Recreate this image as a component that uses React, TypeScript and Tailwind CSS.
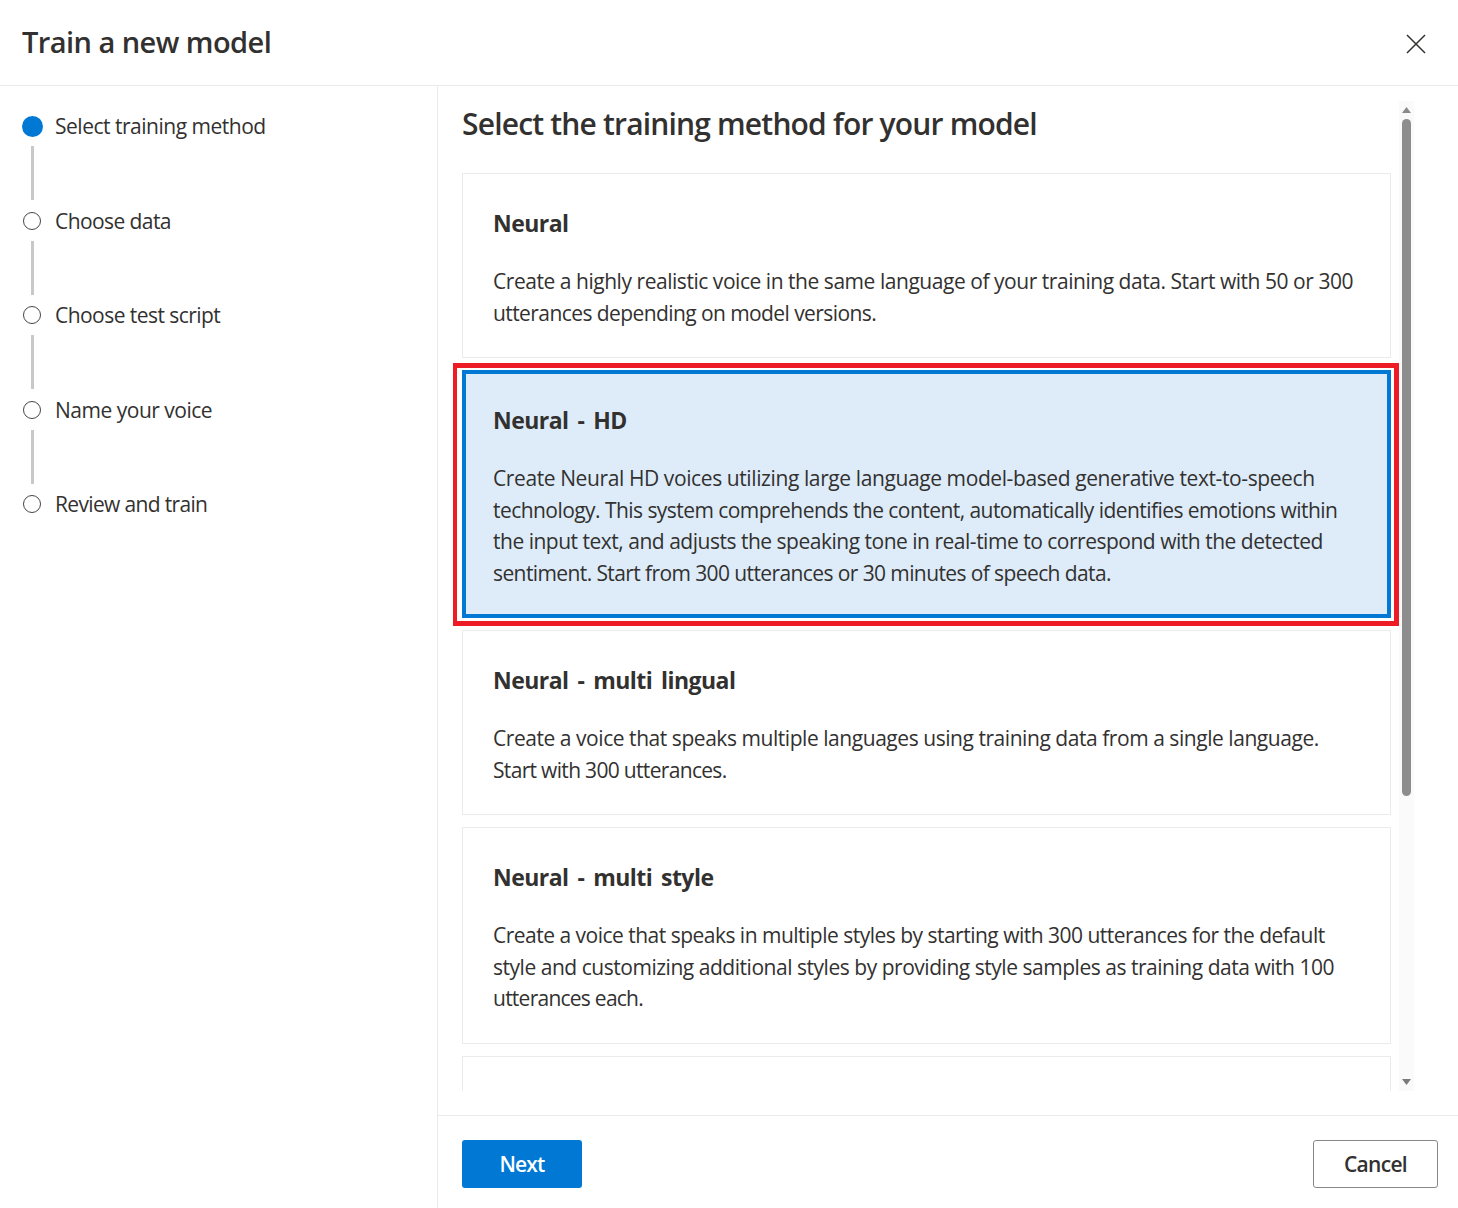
import React from "react";

const steps: [string, string][] = [
  ["Select training method", "tracking-[-0.49px]"],
  ["Choose data", "tracking-[-0.58px]"],
  ["Choose test script", "tracking-[-0.55px]"],
  ["Name your voice", "tracking-[-0.49px]"],
  ["Review and train", "tracking-[-0.66px]"],
];

type Line = [string, string];

const cards: { title: string; h: string; selected?: boolean; lines: Line[] }[] = [
  {
    title: "Neural",
    h: "h-[185px]",
    lines: [
      ["Create a highly realistic voice in the same language of your training data. Start with 50 or 300", "tracking-[-0.46px]"],
      ["utterances depending on model versions.", "tracking-[-0.58px]"],
    ],
  },
  {
    title: "Neural - HD",
    h: "h-[248px]",
    selected: true,
    lines: [
      ["Create Neural HD voices utilizing large language model-based generative text-to-speech", "tracking-[-0.4px]"],
      ["technology. This system comprehends the content, automatically identifies emotions within", "tracking-[-0.55px]"],
      ["the input text, and adjusts the speaking tone in real-time to correspond with the detected", "tracking-[-0.49px]"],
      ["sentiment. Start from 300 utterances or 30 minutes of speech data.", "tracking-[-0.6px]"],
    ],
  },
  {
    title: "Neural - multi lingual",
    h: "h-[185px]",
    lines: [
      ["Create a voice that speaks multiple languages using training data from a single language.", "tracking-[-0.45px]"],
      ["Start with 300 utterances.", "tracking-[-0.68px]"],
    ],
  },
  {
    title: "Neural - multi style",
    h: "h-[217px]",
    lines: [
      ["Create a voice that speaks in multiple styles by starting with 300 utterances for the default", "tracking-[-0.51px]"],
      ["style and customizing additional styles by providing style samples as training data with 100", "tracking-[-0.47px]"],
      ["utterances each.", "tracking-[-0.75px]"],
    ],
  },
];

function Card({ title, lines, h, selected }: { title: string; lines: Line[]; h: string; selected?: boolean }) {
  return (
    <div className={`relative w-[929px] shrink-0 ${h} ${selected ? "border-4 border-[#0078d4] bg-[#deecf9] pl-[27px] pt-[30px]" : "border border-[#ebebeb] bg-white pl-[30px] pt-[33px]"}`}>
      <div className="text-[23px] leading-[32px] font-bold tracking-[-0.55px] [word-spacing:3.5px] text-[#323130]">{title}</div>
      <div className="mt-[27px] text-[21px] leading-[31.7px] text-[#323130]">
        {lines.map(([l, t]) => (
          <div key={l} className={`whitespace-nowrap ${t}`}>{l}</div>
        ))}
      </div>
      {selected && (
        <div className="absolute -left-[13px] -right-[12px] -top-[11px] -bottom-[12px] border-[5px] border-l-4 border-[#ed1c24]" />
      )}
    </div>
  );
}

export default function App() {
  return (
    <div className="h-[1208px] w-[1458px] overflow-hidden bg-white font-['Open_Sans',sans-serif] text-[#323130]">
      <header className="flex h-[86px] items-center justify-between border-b border-[#ebebeb] pl-[22px] pr-[32px]">
        <h1 className="mb-[2px] text-[29px] leading-[40px] font-semibold tracking-[-0.55px]">Train a new model</h1>
        <svg width="20" height="20" viewBox="0 0 20 20" className="mt-[2px]" fill="none" stroke="#323130" strokeWidth="1.5">
          <path d="M1 1L19 19M19 1L1 19" />
        </svg>
      </header>
      <div className="flex h-[1122px]">
        <aside className="w-[438px] shrink-0 border-r border-[#ebebeb] pl-[22px] pt-[26px]">
          {steps.map(([s, t], i) => (
            <div key={s}>
              <div className="flex h-[28px] items-center">
                <div className="flex w-[21px] justify-start">
                  {i === 0 ? (
                    <div className="h-[21px] w-[21px] rounded-full bg-[#0078d4]" />
                  ) : (
                    <div className="ml-[1px] h-[18px] w-[18px] rounded-full border-[1.5px] border-[#484644]" />
                  )}
                </div>
                <span className={`ml-[12px] text-[21px] leading-[28px] ${t}`}>{s}</span>
              </div>
              {i < steps.length - 1 && (
                <div className="ml-[9px] mb-[6.5px] mt-[6px] h-[54px] w-[3px] bg-[#c8c8c8]" />
              )}
            </div>
          ))}
        </aside>
        <main className="flex min-w-0 flex-1 flex-col">
          <div className="flex h-[1030px] shrink-0 border-b border-[#ebebeb] pl-[24px]">
            <div className="w-[937px] shrink-0">
              <h2 className="mt-[17px] text-[30px] leading-[42px] font-semibold tracking-[-0.82px]">Select the training method for your model</h2>
              <div className="mt-[28px] -ml-[9px] flex h-[918px] flex-col gap-[12px] overflow-hidden pl-[9px]">
                {cards.map((c) => (
                  <Card key={c.title} {...c} />
                ))}
                <div className="h-[60px] w-[929px] shrink-0 border border-[#ebebeb] bg-white" />
              </div>
            </div>
            <div className="mt-[15px] flex h-[990px] w-[15px] shrink-0 flex-col items-center bg-[#fafafa]">
              <svg width="9" height="6" viewBox="0 0 9 6" className="mt-[6px]"><path d="M4.5 0L9 6H0Z" fill="#8a8a8a" /></svg>
              <div className="mt-[6px] h-[677px] w-[9px] rounded-full bg-[#8d8d8d]" />
              <svg width="9" height="6" viewBox="0 0 9 6" className="mt-auto mb-[6px]"><path d="M0 0H9L4.5 6Z" fill="#7a7a7a" /></svg>
            </div>
          </div>
          <footer className="flex h-[92px] items-start justify-between pl-[24px] pr-[20px] pt-[24px]">
            <button className="h-[48px] w-[120px] rounded-[3px] bg-[#0078d4] pt-[1px] text-[21px] font-semibold tracking-[-0.8px] text-white">Next</button>
            <button className="h-[48px] w-[125px] rounded-[3px] border border-[#8a8886] bg-white pt-[1px] text-[21px] font-semibold tracking-[-0.7px] text-[#323130]">Cancel</button>
          </footer>
        </main>
      </div>
    </div>
  );
}
